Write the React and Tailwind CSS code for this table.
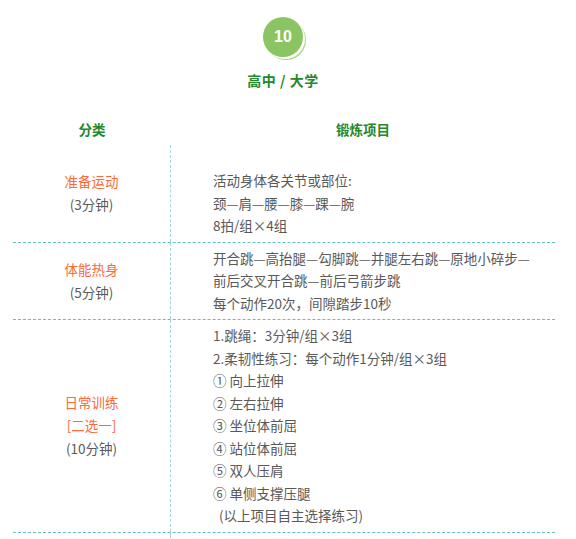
import React from "react";

const font = { fontFamily: '"Noto Sans CJK SC", "Noto Sans", sans-serif' };

const rows = [
  {
    left: [{ t: "准备运动", hot: true }, { t: "(3分钟)" }],
    right: ["活动身体各关节或部位:", "颈—肩—腰—膝—踝—腕", "8拍/组×4组"],
    pad: "pt-[24px] pb-[5px]",
  },
  {
    left: [{ t: "体能热身", hot: true }, { t: "(5分钟)" }],
    right: [
      "开合跳—高抬腿—勾脚跳—并腿左右跳—原地小碎步—",
      "前后交叉开合跳—前后弓箭步跳",
      "每个动作20次，间隙踏步10秒",
    ],
    pad: "pt-[4px] pb-[5px]",
  },
  {
    left: [{ t: "日常训练", hot: true }, { t: "[二选一]", hot: true }, { t: "(10分钟)" }],
    right: [
      "1.跳绳：3分钟/组×3组",
      "2.柔韧性练习：每个动作1分钟/组×3组",
      "① 向上拉伸",
      "② 左右拉伸",
      "③ 坐位体前屈",
      "④ 站位体前屈",
      "⑤ 双人压肩",
      "⑥ 单侧支撑压腿",
      "  (以上项目自主选择练习)",
    ],
    pad: "pt-[4px] pb-[5px]",
  },
];

export default function App() {
  return (
    <div className="bg-white w-[576px] min-h-[539px] pt-[17px]" style={font}>
      {/* badge + title */}
      <div className="flex flex-col items-center w-[566px]">
        <div className="w-10 h-10 rounded-full bg-[#8bc462] flex items-center justify-center shadow-[2px_2px_0_0_#fff,3px_3px_0_0_#a6d888]">
          <span className="text-white text-[16px] font-bold" style={{ fontFamily: '"Liberation Sans", Arial, sans-serif' }}>10</span>
        </div>
        <div className="mt-[12px] h-[22px] leading-[22px] text-[14px] font-bold text-[#25892c] tracking-[0.5px]">
          高中 / 大学
        </div>
      </div>

      {/* table */}
      <div className="ml-[13px] w-[542px] mt-[22px] text-[13.5px] text-[#595959]">
        <div className="grid grid-cols-[158px_1fr] h-[32px] items-center font-bold text-[#25892c]">
          <div className="text-center">分类</div>
          <div className="text-center">锻炼项目</div>
        </div>

        {rows.map((r, i) => (
          <div key={i} className="grid grid-cols-[158px_1fr] border-b border-dashed border-[#63bdca]">
            <div className="border-r border-dashed border-[#a7d2da] flex flex-col items-center justify-center leading-[23px]">
              {r.left.map((l, j) => (
                <span key={j} className={l.hot ? "text-[#fa6b3a]" : "text-[#595959]"}>
                  {l.t}
                </span>
              ))}
            </div>
            <div className={`pl-[42px] leading-[22.5px] ${r.pad}`}>
              {r.right.map((line, j) => (
                <div key={j} className="whitespace-pre">{line}</div>
              ))}
            </div>
          </div>
        ))}

        <div className="grid grid-cols-[158px_1fr] h-[5px]">
          <div className="border-r border-dashed border-[#a7d2da]" />
          <div />
        </div>
      </div>
    </div>
  );
}
